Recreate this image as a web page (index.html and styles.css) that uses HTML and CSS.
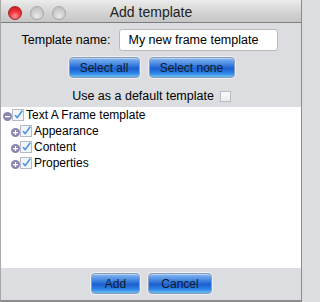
FILE: index.html
```html
<!DOCTYPE html>
<html>
<head>
<meta charset="utf-8">
<link rel="stylesheet" href="styles.css">
</head>
<body>
<div class="window">
  <div class="titlebar">
    <div class="lights">
      <span class="light red"></span>
      <span class="light"></span>
      <span class="light"></span>
    </div>
    <div class="title">Add template</div>
    <div></div>
  </div>
  <div class="top">
    <div class="name-row">
      <span class="label">Template name:</span>
      <div class="field">My new frame template</div>
    </div>
    <div class="btn-row">
      <button class="aqua sel-all">Select all</button>
      <button class="aqua sel-none">Select none</button>
    </div>
    <div class="default-row">
      <span>Use as a default template</span>
      <span class="box"></span>
    </div>
  </div>
  <div class="tree">
    <div class="node root">
      <span class="toggle"><svg width="9" height="9" viewBox="0 0 9 9"><circle cx="4.5" cy="4.5" r="4.5" fill="#8a86ad"/><rect x="2" y="4" width="5" height="1.3" fill="#fff"/></svg></span>
      <span class="cb"><svg width="12" height="12" viewBox="0 0 12 12"><rect x="0.5" y="0.5" width="11" height="11" fill="#f2f4f7" stroke="#b4bac2"/><path d="M3 6.2 L5.2 8.6 L10.2 1.8" fill="none" stroke="#3d95e6" stroke-width="1.6"/></svg></span>
      <span class="txt">Text A Frame template</span>
    </div>
    <div class="node child">
      <span class="toggle"><svg width="9" height="9" viewBox="0 0 9 9"><circle cx="4.5" cy="4.5" r="4.5" fill="#8a86ad"/><rect x="2" y="4" width="5" height="1.3" fill="#fff"/><rect x="3.85" y="2" width="1.3" height="5" fill="#fff"/></svg></span>
      <span class="cb"><svg width="12" height="12" viewBox="0 0 12 12"><rect x="0.5" y="0.5" width="11" height="11" fill="#f2f4f7" stroke="#b4bac2"/><path d="M3 6.2 L5.2 8.6 L10.2 1.8" fill="none" stroke="#3d95e6" stroke-width="1.6"/></svg></span>
      <span class="txt">Appearance</span>
    </div>
    <div class="node child">
      <span class="toggle"><svg width="9" height="9" viewBox="0 0 9 9"><circle cx="4.5" cy="4.5" r="4.5" fill="#8a86ad"/><rect x="2" y="4" width="5" height="1.3" fill="#fff"/><rect x="3.85" y="2" width="1.3" height="5" fill="#fff"/></svg></span>
      <span class="cb"><svg width="12" height="12" viewBox="0 0 12 12"><rect x="0.5" y="0.5" width="11" height="11" fill="#f2f4f7" stroke="#b4bac2"/><path d="M3 6.2 L5.2 8.6 L10.2 1.8" fill="none" stroke="#3d95e6" stroke-width="1.6"/></svg></span>
      <span class="txt">Content</span>
    </div>
    <div class="node child">
      <span class="toggle"><svg width="9" height="9" viewBox="0 0 9 9"><circle cx="4.5" cy="4.5" r="4.5" fill="#8a86ad"/><rect x="2" y="4" width="5" height="1.3" fill="#fff"/><rect x="3.85" y="2" width="1.3" height="5" fill="#fff"/></svg></span>
      <span class="cb"><svg width="12" height="12" viewBox="0 0 12 12"><rect x="0.5" y="0.5" width="11" height="11" fill="#f2f4f7" stroke="#b4bac2"/><path d="M3 6.2 L5.2 8.6 L10.2 1.8" fill="none" stroke="#3d95e6" stroke-width="1.6"/></svg></span>
      <span class="txt">Properties</span>
    </div>
  </div>
  <div class="bottom">
    <button class="aqua add">Add</button>
    <button class="aqua cancel">Cancel</button>
  </div>
</div>
</body>
</html>
```
FILE: styles.css
```css
html, body {
  margin: 0;
  padding: 0;
  background: #dcdde1;
}
body {
  font-family: "Liberation Sans", Arial, sans-serif;
  font-size: 12.5px;
  color: #000;
}
.window {
  width: 302px;
  height: 302px;
  box-sizing: border-box;
  border-right: 1px solid #8c8c8c;
  border-left: 1px solid #a8a8a8;
  border-bottom: 2px solid #8c8c8c;
  display: flex;
  flex-direction: column;
  background: #dcdde1;
}
.titlebar {
  height: 22px;
  border-bottom: 1px solid #7d7d7d;
  background: linear-gradient(#ececec, #d2d2d2 60%, #c6c6c6);
  display: grid;
  grid-template-columns: 1fr auto 1fr;
  align-items: center;
}
.lights {
  display: flex;
  gap: 8px;
  padding-left: 7px;
  padding-top: 3px;
}
.light {
  width: 14px;
  height: 14px;
  border-radius: 50%;
  box-sizing: border-box;
  border: 1px solid #a9a9a9;
  background: radial-gradient(circle at 50% 75%, #eaeaea 0, #d0d0d0 45%, #b8b8b8 100%);
}
.light.red {
  border-color: #a4262c;
  background: radial-gradient(circle at 50% 78%, #ff9a9a 0, #f0363c 45%, #c3151b 100%);
}
.title {
  font-size: 14px;
  color: #222;
  padding-top: 2px;
}
.top {
  display: flex;
  flex-direction: column;
  align-items: center;
  padding-top: 6px;
  height: 84px;
  box-sizing: border-box;
}
.name-row {
  display: flex;
  align-items: center;
  gap: 9px;
  margin-left: -2px;
}
.field {
  width: 159px;
  height: 22px;
  box-sizing: border-box;
  background: #fff;
  border: 1px solid #b9b9b9;
  border-radius: 3px;
  padding-left: 8px;
  line-height: 20px;
}
.btn-row {
  display: flex;
  gap: 9px;
  margin-top: 6px;
  margin-left: 1px;
}
.aqua {
  height: 21px;
  box-sizing: border-box;
  border: 1px solid #8b9cb5;
  border-radius: 4px;
  font-family: "Liberation Sans", Arial, sans-serif;
  font-size: 12px;
  color: #0d1a2a;
  padding: 0;
  background: linear-gradient(#8ab8f0 0%, #3f84e0 35%, #1c5fd2 55%, #2d84e6 80%, #6cc0f6 100%);
  box-shadow: 0 0 0 1px rgba(255,255,255,0.55), inset 0 1px 0 rgba(255,255,255,0.4);
}
.sel-all { width: 71px; }
.sel-none { width: 86px; }
.default-row {
  display: flex;
  align-items: center;
  gap: 6px;
  margin-top: 11px;
  margin-left: 1px;
}
.box {
  width: 11px;
  height: 11px;
  box-sizing: border-box;
  border: 1px solid #b9bcc2;
  background: linear-gradient(#fafafa, #ececec);
}
.tree {
  height: 161px;
  background: #fff;
  box-sizing: border-box;
}
.node {
  height: 16px;
  display: flex;
  align-items: center;
}
.node.root { padding-left: 2px; }
.node.child { padding-left: 10px; }
.toggle {
  width: 9px;
  height: 9px;
  display: flex;
  margin-top: 2px;
}
.cb {
  width: 12px;
  height: 12px;
  display: flex;
}
.txt {
  margin-left: 2px;
  font-size: 12px;
}
.bottom {
  flex: 1;
  display: flex;
  justify-content: center;
  align-items: flex-start;
  gap: 8px;
  padding-top: 5px;
  padding-left: 1px;
}
.add { width: 49px; }
.cancel { width: 64px; }
```
